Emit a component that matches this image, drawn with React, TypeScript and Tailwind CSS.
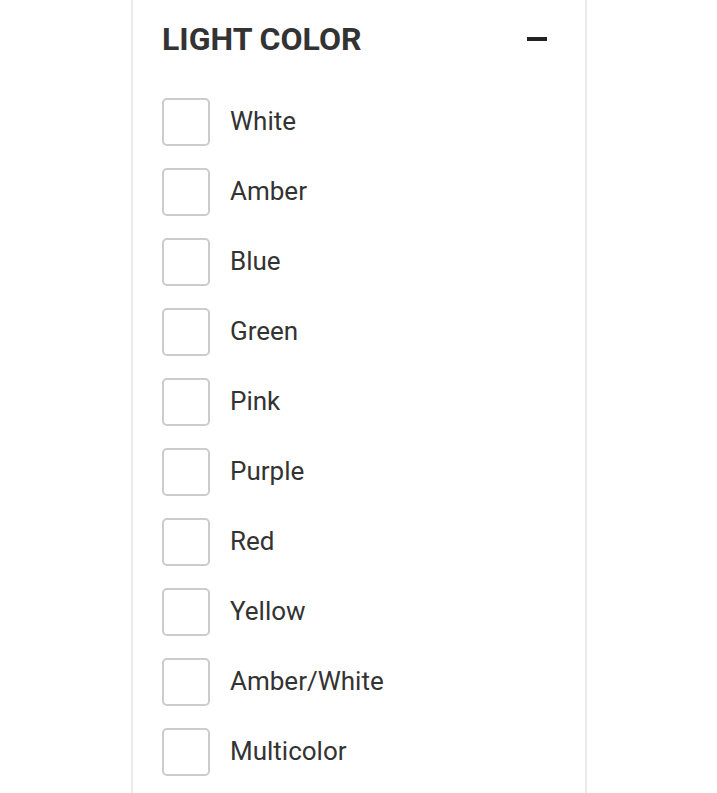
import React from "react";

const items = ["White", "Amber", "Blue", "Green", "Pink", "Purple", "Red", "Yellow", "Amber/White", "Multicolor"];

export default function App() {
  return (
    <div className="w-[717px] h-[793px] bg-white overflow-hidden" style={{ fontFamily: "Roboto, 'Liberation Sans', sans-serif" }}>
      <div className="ml-[131px] w-[456px] h-[793px] border-x-2 border-[#ebebeb] pl-[29px] pr-[38px]">
        <div className="flex items-center justify-between h-[78px]">
          <h2 className="text-[32px] font-bold text-[#333] leading-none">LIGHT COLOR</h2>
          <div className="w-[20px] h-[4px] bg-[#222]" />
        </div>
        <ul className="flex flex-col gap-[22px] pt-[20px]">
          {items.map((it) => (
            <li key={it} className="flex items-center gap-[20px] h-[48px]">
              <span className="w-[48px] h-[48px] rounded-[5px] border-2 border-[#cccccc] bg-white shrink-0" />
              <span className="text-[26px] text-[#333] leading-none -mt-[2px]">{it}</span>
            </li>
          ))}
        </ul>
      </div>
    </div>
  );
}
